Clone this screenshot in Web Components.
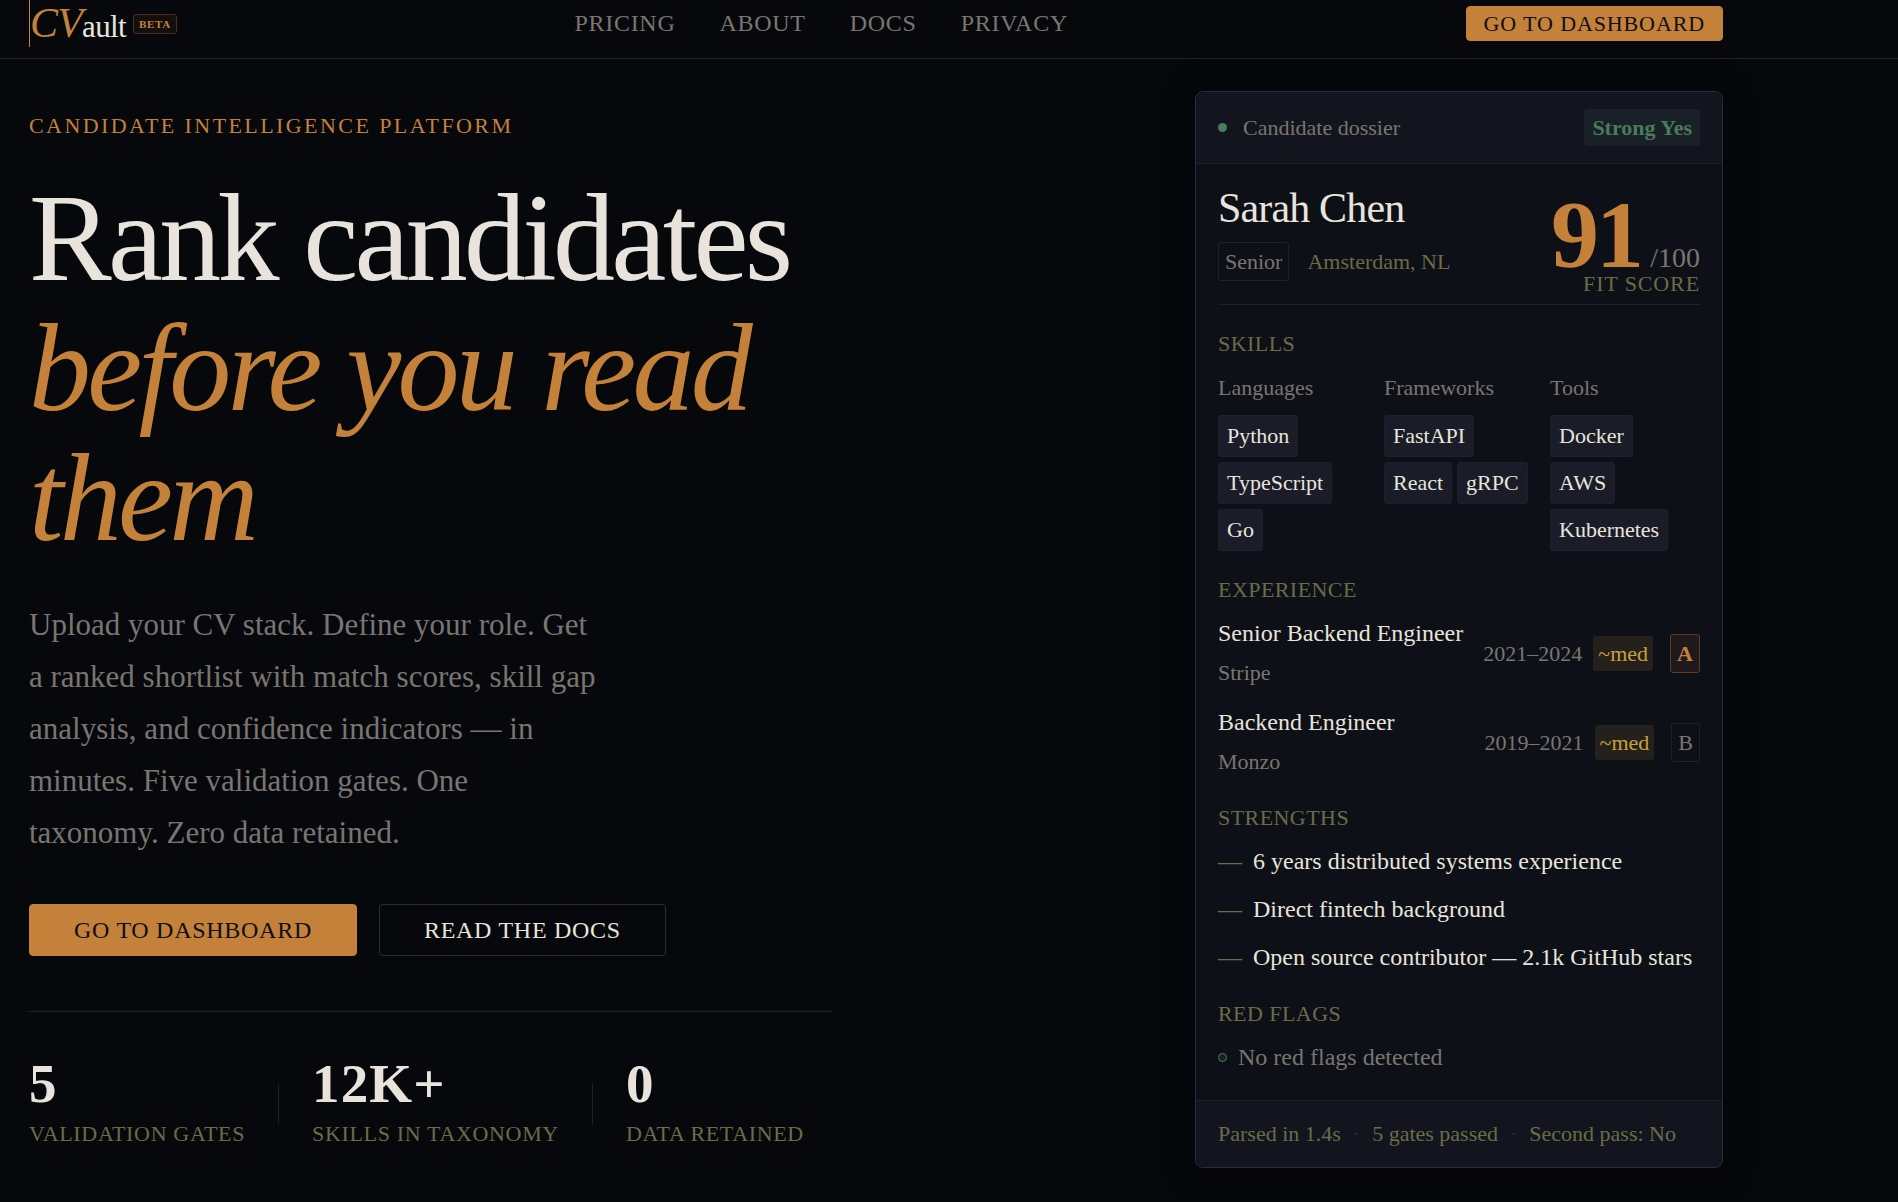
<!DOCTYPE html>
<html lang="en">
<head>
    <meta charset="UTF-8">
    <meta name="viewport" content="width=device-width, initial-scale=1">
    <title>CVault</title>
    <style>
        :root {
            --bg: #07080c;
            --card: #0e1017;
            --panel: #13151e;
            --tag: #1a1d28;
            --line: #1e2030;
            --line-strong: #2a2c3e;
            --text: #e8e4dc;
            --muted: #7a7570;
            --dim: #6b6b47;
            --amber: #c4813a;
            --green: #4a7c59;
            --yellow: #c9a03a;
        }
        body {
            margin: 0;
            background: var(--bg);
            color: var(--text);
            font: 22px/35px "Liberation Serif", "Times New Roman", serif;
        }
        main {
            display: grid;
            grid-template-columns: minmax(0, 803px) minmax(0, 528px);
            justify-content: space-between;
            align-items: center;
            box-sizing: border-box;
            max-width: 1756px;
            padding: 32px 33px 33px 29px;
        }
    </style>
</head>
<body>

<site-header>
    <a slot="nav" href="#pricing">PRICING</a>
    <a slot="nav" href="#about">ABOUT</a>
    <a slot="nav" href="#docs">DOCS</a>
    <a slot="nav" href="#privacy">PRIVACY</a>
    <cta-button slot="action" size="small">GO TO DASHBOARD</cta-button>
</site-header>

<main>
    <hero-intro>
        <span slot="eyebrow">CANDIDATE INTELLIGENCE PLATFORM</span>
        <span slot="title">Rank candidates</span>
        <span slot="accent">before you read them</span>
        <span slot="text">Upload your CV stack. Define your role. Get a ranked shortlist with match scores, skill gap analysis, and confidence indicators — in minutes. Five validation gates. One taxonomy. Zero data retained.</span>
        <cta-button slot="actions">GO TO DASHBOARD</cta-button>
        <cta-button slot="actions" variant="outline">READ THE DOCS</cta-button>
        <stat-item slot="stats" value="5">VALIDATION GATES</stat-item>
        <stat-item slot="stats" value="12K+">SKILLS IN TAXONOMY</stat-item>
        <stat-item slot="stats" value="0">DATA RETAINED</stat-item>
    </hero-intro>

    <dossier-card verdict="Strong Yes">
        <candidate-summary name="Sarah Chen" level="Senior" place="Amsterdam, NL" score="91"></candidate-summary>
        <dossier-section header="SKILLS">
            <skill-grid>
                <skill-group header="Languages" skills="Python,TypeScript,Go"></skill-group>
                <skill-group header="Frameworks" skills="FastAPI,React,gRPC"></skill-group>
                <skill-group header="Tools" skills="Docker,AWS,Kubernetes"></skill-group>
            </skill-grid>
        </dossier-section>
        <dossier-section header="EXPERIENCE">
            <job-row role-name="Senior Backend Engineer" company="Stripe" period="2021–2024" confidence="~med" grade="A"></job-row>
            <job-row role-name="Backend Engineer" company="Monzo" period="2019–2021" confidence="~med" grade="B"></job-row>
        </dossier-section>
        <dossier-section header="STRENGTHS">
            <strength-list items="6 years distributed systems experience|Direct fintech background|Open source contributor — 2.1k GitHub stars"></strength-list>
        </dossier-section>
        <dossier-section header="RED FLAGS">
            <flag-note>No red flags detected</flag-note>
        </dossier-section>
        <span slot="footer">Parsed in 1.4s</span>
        <span slot="footer">5 gates passed</span>
        <span slot="footer">Second pass: No</span>
    </dossier-card>
</main>

<script>
    // Small base: every element renders its template once into an open root.
    class BaseElement extends HTMLElement {
        constructor() {
            super();
            this.attachShadow({mode: 'open'});
        }
        connectedCallback() {
            this.shadowRoot.innerHTML = this.render();
        }
        attr(name) {
            return this.getAttribute(name) || '';
        }
    }

    customElements.define('site-header', class extends BaseElement {
        render() {
            return `
                <style>
                    :host { display: block; border-bottom: 1px solid var(--line); }
                    header {
                        display: flex;
                        justify-content: space-between;
                        align-items: center;
                        box-sizing: border-box;
                        max-width: 1756px;
                        padding: 0 33px 11px 29px;
                    }
                    .logo { display: flex; align-items: center; color: var(--text); text-decoration: none; }
                    .word { display: flex; align-items: baseline; border-left: 1px solid var(--amber); }
                    .cv { color: var(--amber); font-size: 42px; font-style: italic; line-height: 47px; letter-spacing: -0.02em; }
                    .ault { font-size: 31px; line-height: 31px; letter-spacing: -0.02em; }
                    .beta {
                        margin-left: 7px;
                        padding: 0 5px;
                        border: 1px solid #4a2f1a;
                        border-radius: 3px;
                        background: #130f0f;
                        color: var(--amber);
                        font-size: 11px;
                        font-weight: bold;
                        line-height: 18px;
                        letter-spacing: 0.06em;
                    }
                    nav { display: flex; gap: 44px; }
                    ::slotted(a) { color: var(--muted); font-size: 24px; letter-spacing: 0.03em; text-decoration: none; }
                </style>
                <header>
                    <a class="logo" href="#">
                        <span class="word"><span class="cv">CV</span><span class="ault">ault</span></span>
                        <span class="beta">BETA</span>
                    </a>
                    <nav><slot name="nav"></slot></nav>
                    <slot name="action"></slot>
                </header>`;
        }
    });

    customElements.define('cta-button', class extends BaseElement {
        render() {
            return `
                <style>
                    :host { display: block; }
                    button {
                        display: block;
                        margin: 0;
                        padding: 0 44px;
                        border: 1px solid var(--amber);
                        border-radius: 4px;
                        background: var(--amber);
                        color: #0e1017;
                        font: inherit;
                        font-size: 24px;
                        line-height: 50px;
                        letter-spacing: 0.03em;
                        white-space: nowrap;
                        cursor: pointer;
                    }
                    :host([size="small"]) button { padding: 0 17px; font-size: 22px; line-height: 33px; letter-spacing: 0.04em; }
                    :host([variant="outline"]) button { border-color: var(--line-strong); background: none; color: var(--text); }
                </style>
                <button type="button"><slot></slot></button>`;
        }
    });

    customElements.define('hero-intro', class extends BaseElement {
        render() {
            return `
                <style>
                    :host { display: block; }
                    .eyebrow { margin: 0; color: var(--amber); letter-spacing: 0.11em; }
                    h1 { margin: 31px 0 0; font-size: 124px; font-weight: normal; line-height: 130px; letter-spacing: -0.03em; }
                    em { display: block; color: var(--amber); }
                    .text { max-width: 572px; margin: 35px 0 0; color: var(--muted); font-size: 31px; line-height: 52px; }
                    .actions { display: flex; gap: 22px; margin-top: 45px; }
                    .stats { display: flex; gap: 33px; margin-top: 55px; padding-top: 44px; border-top: 1px solid var(--line); }
                </style>
                <p class="eyebrow"><slot name="eyebrow"></slot></p>
                <h1><slot name="title"></slot><em><slot name="accent"></slot></em></h1>
                <p class="text"><slot name="text"></slot></p>
                <div class="actions"><slot name="actions"></slot></div>
                <div class="stats"><slot name="stats"></slot></div>`;
        }
    });

    customElements.define('stat-item', class extends BaseElement {
        render() {
            return `
                <style>
                    :host { display: flex; align-items: center; gap: 33px; }
                    :host(:not(:last-of-type))::after { content: ""; width: 1px; height: 40px; background: var(--line); }
                    .value { display: block; margin-bottom: 5px; font-size: 55px; font-weight: bold; line-height: 55px; letter-spacing: 0.02em; }
                    .label { color: var(--dim); letter-spacing: 0.03em; white-space: nowrap; }
                </style>
                <div>
                    <span class="value">${this.attr('value')}</span>
                    <span class="label"><slot></slot></span>
                </div>`;
        }
    });

    customElements.define('dossier-card', class extends BaseElement {
        render() {
            return `
                <style>
                    :host {
                        display: block;
                        overflow: hidden;
                        border: 1px solid var(--line-strong);
                        border-radius: 8px;
                        background: var(--card);
                        box-shadow: 0 4px 32px rgba(0, 0, 0, 0.5);
                    }
                    header, footer { display: flex; align-items: center; background: var(--panel); }
                    header { gap: 16px; padding: 17px 22px; border-bottom: 1px solid var(--line); color: var(--muted); }
                    .dot { width: 9px; height: 9px; border-radius: 50%; background: var(--green); }
                    .verdict {
                        margin-left: auto;
                        padding: 1px 8px;
                        border-radius: 4px;
                        background: #192027;
                        color: var(--green);
                        font-weight: bold;
                    }
                    .body { display: flex; flex-direction: column; gap: 21px; padding: 22px 22px 25px; }
                    footer { padding: 15px 22px 16px; border-top: 1px solid var(--line); color: var(--dim); }
                    ::slotted([slot="footer"]:not(:last-child))::after { content: "·"; margin: 0 12px; color: var(--line-strong); }
                </style>
                <header>
                    <span class="dot"></span>
                    <span>Candidate dossier</span>
                    <span class="verdict">${this.attr('verdict')}</span>
                </header>
                <div class="body"><slot></slot></div>
                <footer><slot name="footer"></slot></footer>`;
        }
    });

    customElements.define('candidate-summary', class extends BaseElement {
        render() {
            return `
                <style>
                    :host {
                        display: flex;
                        justify-content: space-between;
                        align-items: flex-start;
                        padding-bottom: 9px;
                        border-bottom: 1px solid var(--line);
                    }
                    h2 { margin: 0 0 12px; font-size: 42px; font-weight: normal; line-height: 44px; letter-spacing: -0.02em; }
                    .meta { display: flex; align-items: center; gap: 18px; color: var(--dim); }
                    .level { padding: 1px 6px; border: 1px solid var(--line); border-radius: 3px; color: var(--muted); }
                    .score { padding-top: 10px; text-align: right; }
                    .value { line-height: 22px; color: var(--muted); font-size: 28px; }
                    .value b { margin-right: 9px; color: var(--amber); font-size: 96px; line-height: 77px; letter-spacing: -0.03em; }
                    .caption { color: var(--dim); line-height: 22px; letter-spacing: 0.04em; }
                </style>
                <div>
                    <h2>${this.attr('name')}</h2>
                    <div class="meta">
                        <span class="level">${this.attr('level')}</span>
                        <span>${this.attr('place')}</span>
                    </div>
                </div>
                <div class="score">
                    <div class="value"><b>${this.attr('score')}</b>/100</div>
                    <div class="caption">FIT SCORE</div>
                </div>`;
        }
    });

    customElements.define('dossier-section', class extends BaseElement {
        render() {
            return `
                <style>
                    :host { display: block; }
                    h3 { margin: 0 0 9px; color: var(--dim); font-size: 22px; font-weight: normal; letter-spacing: 0.02em; }
                    .content { display: flex; flex-direction: column; gap: 15px; }
                </style>
                <h3>${this.attr('header')}</h3>
                <div class="content"><slot></slot></div>`;
        }
    });

    customElements.define('skill-grid', class extends BaseElement {
        render() {
            return `
                <style>
                    :host { display: grid; grid-template-columns: repeat(3, minmax(0, 1fr)); gap: 16px; }
                </style>
                <slot></slot>`;
        }
    });

    customElements.define('skill-group', class extends BaseElement {
        render() {
            const tags = this.attr('skills').split(',').map(s => `<li>${s}</li>`).join('');
            return `
                <style>
                    :host { display: block; }
                    h4 { margin: 0 0 10px; color: var(--muted); font-size: 22px; font-weight: normal; }
                    ul { display: flex; flex-wrap: wrap; gap: 5px; margin: 0; padding: 0; list-style: none; }
                    li {
                        padding: 2px 8px 3px;
                        border: 1px solid var(--line);
                        border-radius: 3px;
                        background: var(--tag);
                    }
                </style>
                <h4>${this.attr('header')}</h4>
                <ul>${tags}</ul>`;
        }
    });

    customElements.define('job-row', class extends BaseElement {
        render() {
            return `
                <style>
                    :host { display: flex; align-items: center; color: var(--muted); }
                    .job { flex: 1; }
                    .title { margin-bottom: 4px; color: var(--text); font-size: 24px; }
                    .confidence {
                        margin: 0 17px 0 11px;
                        padding: 0 5px;
                        border-radius: 3px;
                        background: #24201b;
                        color: var(--yellow);
                    }
                    .grade { padding: 1px 6px; border: 1px solid var(--line); border-radius: 3px; }
                    :host([grade="A"]) .grade { border-color: #5c3d22; background: #20191b; color: var(--amber); font-weight: bold; }
                </style>
                <div class="job">
                    <div class="title">${this.attr('role-name')}</div>
                    <div>${this.attr('company')}</div>
                </div>
                <span>${this.attr('period')}</span>
                <span class="confidence">${this.attr('confidence')}</span>
                <span class="grade">${this.attr('grade')}</span>`;
        }
    });

    customElements.define('strength-list', class extends BaseElement {
        render() {
            const rows = this.attr('items').split('|').map(s => `<li>${s}</li>`).join('');
            return `
                <style>
                    :host { display: block; font-size: 24px; }
                    ul { display: flex; flex-direction: column; gap: 13px; margin: 0; padding: 0; list-style: none; }
                    li { display: flex; gap: 11px; }
                    li::before { content: "—"; color: var(--dim); }
                </style>
                <ul>${rows}</ul>`;
        }
    });

    customElements.define('flag-note', class extends BaseElement {
        render() {
            return `
                <style>
                    :host { display: flex; align-items: center; gap: 11px; color: var(--muted); font-size: 24px; }
                    .ring {
                        box-sizing: border-box;
                        width: 9px;
                        height: 9px;
                        border: 1px solid var(--green);
                        border-radius: 50%;
                        background: #15241f;
                    }
                </style>
                <span class="ring"></span>
                <span><slot></slot></span>`;
        }
    });
</script>

</body>
</html>
